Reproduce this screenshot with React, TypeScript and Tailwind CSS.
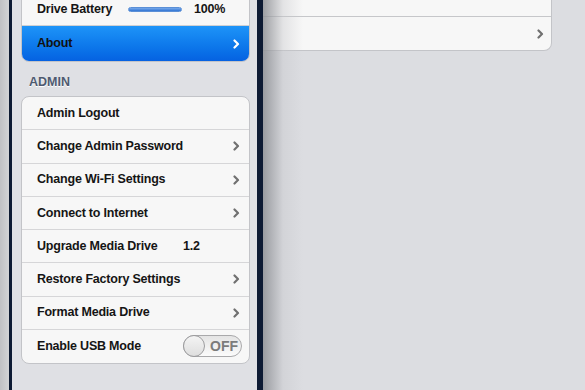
import { ReactNode } from "react"

const Chevron = (props: { color?: string }) => (
    <svg width="7" height="10" viewBox="0 0 7 10" className="shrink-0">
        <path d="M1.5 1.5 L5 5 L1.5 8.5" fill="none" stroke={props.color ?? "#707070"} strokeWidth="2.2" strokeLinecap="round" strokeLinejoin="round" />
    </svg>
)

const Row = (props: { children: ReactNode, chevron?: boolean, last?: boolean }) => (
    <div className={`h-[33.25px] flex items-center pl-[15px] pr-[9px] ${props.last ? "" : "border-b border-[#d6d6d8]"}`}>
        <div className="flex-1 flex items-center">{props.children}</div>
        {props.chevron && <Chevron />}
    </div>
)

const adminRows = [
    { label: "Admin Logout" },
    { label: "Change Admin Password", chevron: true },
    { label: "Change Wi-Fi Settings", chevron: true },
    { label: "Connect to Internet", chevron: true },
]

export default function App() {
    return (
        <div className="w-[585px] h-[390px] overflow-hidden flex bg-[#dcdde1] relative text-[12.5px] tracking-[-0.2px] font-bold text-[#151515]" style={{ fontFamily: '"Liberation Sans", Arial, sans-serif' }}>
            <div className="w-[9px] bg-gradient-to-r from-[#bfc0c4] to-[#d2d3d6]" />
            <div className="w-[3px] bg-[#0d1a33]" />

            <div className="w-[245px] bg-[#dfe0e4] flex flex-col pl-[9px] pr-[7px] -mt-[9px]">
                <div className="bg-[#f7f7f7] border border-[#c3c4c8] rounded-[8px] overflow-hidden">
                    <div className="h-[34px] flex items-center pl-[15px] pt-[1px] border-b border-[#cfd0d3]">
                        <span className="w-[91px]">Drive Battery</span>
                        <div className="w-[54px] h-[5px] rounded-full bg-gradient-to-b from-[#78a9ea] to-[#2f74d3] border border-[#5b8fd6]" />
                        <span className="ml-[12px]">100%</span>
                    </div>
                    <div className="h-[35px] flex items-center pl-[15px] pr-[9px] bg-gradient-to-b from-[#1e94f8] to-[#0662e1] text-[#111]">
                        <span className="flex-1">About</span>
                        <Chevron color="#ffffff" />
                    </div>
                </div>

                <div className="mt-[12px] mb-[6px] pl-[8px] h-[16px] flex items-center text-[12.5px] tracking-normal text-[#4e5a70] [text-shadow:0_1px_0_#ffffff]">ADMIN</div>

                <div className="bg-[#f7f7f7] border border-[#c3c4c8] rounded-[8px] overflow-hidden">
                    {adminRows.map(r => (
                        <Row key={r.label} chevron={r.chevron}><span>{r.label}</span></Row>
                    ))}
                    <Row>
                        <span className="w-[146px]">Upgrade Media Drive</span>
                        <span>1.2</span>
                    </Row>
                    <Row chevron><span>Restore Factory Settings</span></Row>
                    <Row chevron><span>Format Media Drive</span></Row>
                    <div className="h-[33.25px] flex items-center pl-[15px] pr-[7px]">
                        <span className="flex-1">Enable USB Mode</span>
                        <div className="w-[59px] h-[22px] rounded-full border border-[#a9a9ab] bg-gradient-to-b from-[#e4e4e4] to-[#fbfbfb] flex items-center">
                            <div className="w-[22px] h-[22px] -ml-[1px] rounded-full border border-[#9c9c9e] bg-gradient-to-b from-[#f4f4f4] to-[#dedede]" />
                            <span className="ml-[5px] text-[#7b7b7b] text-[14px] tracking-normal">OFF</span>
                        </div>
                    </div>
                </div>
            </div>

            <div className="w-[6px] bg-[#0d1a33]" />

            <div className="flex-1 pr-[33px] -mt-[18px]">
                <div className="bg-[#f7f7f7] border border-[#c3c4c8] border-l-0 rounded-r-[8px]">
                    <div className="h-[34px] border-b border-[#c6c7ca]" />
                    <div className="h-[33px] flex items-center justify-end pr-[7px]">
                        <Chevron />
                    </div>
                </div>
            </div>

            <div className="absolute top-0 bottom-0 left-[263px] w-[40px] bg-gradient-to-r from-[#8e9095]/85 via-[#c4c5c9]/40 to-transparent pointer-events-none" />
        </div>
    )
}
